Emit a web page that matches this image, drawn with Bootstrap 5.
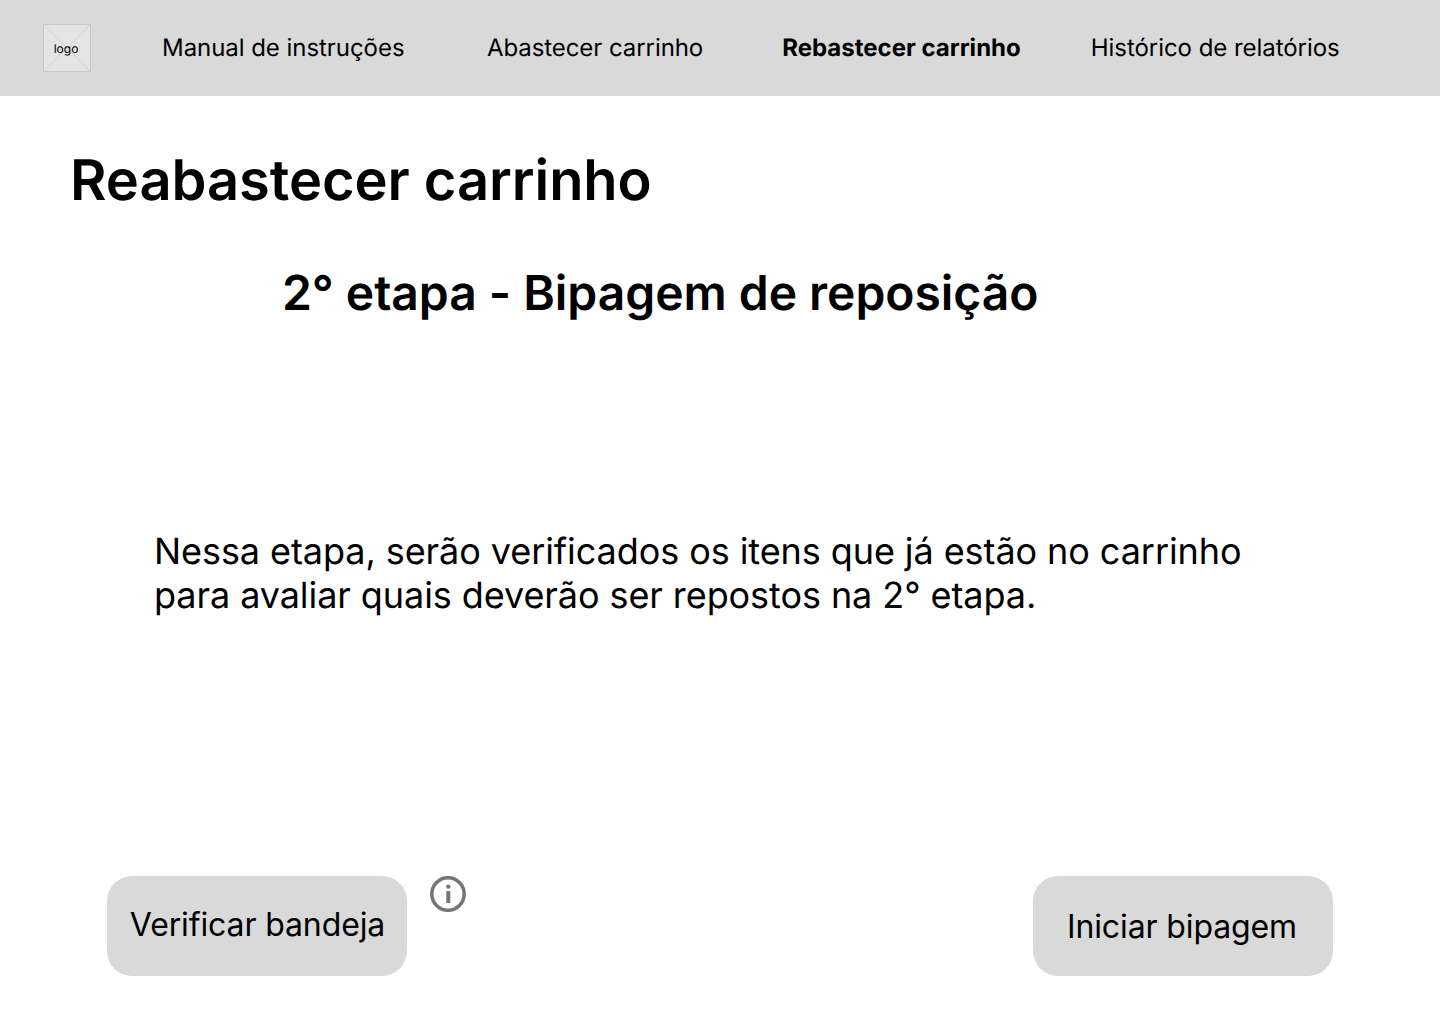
<!DOCTYPE html>
<html lang="pt-BR">
<head>
<meta charset="utf-8">
<meta name="viewport" content="width=device-width, initial-scale=1">
<title>Reabastecer carrinho</title>
<link href="https://cdn.jsdelivr.net/npm/bootstrap@5.3.0/dist/css/bootstrap.min.css" rel="stylesheet">
<style>
body{font-family:Inter,"Liberation Sans",sans-serif;color:#000;height:1024px;overflow:hidden;text-rendering:geometricPrecision}
.topbar{background:#d9d9d9;height:96px;padding:0 0 0 43px}
.brand-logo{width:48px;height:48px;display:block}
.brand-logo text{font-size:12px;fill:#000}
.menu{margin-left:71px;padding-bottom:1px;font-size:24px;line-height:29px;white-space:nowrap}
.menu .nav-link{color:#000;padding:0;letter-spacing:-.05px}
.menu .item-supply{margin-left:82.4px;letter-spacing:-.07px}
.menu .item-restock{margin-left:79px;letter-spacing:0}
.menu .item-history{margin-left:70px}
.page-title{font-size:56px;line-height:68px;font-weight:600;margin:50px 0 0 70px;letter-spacing:-.05px}
.step-title{font-size:48px;line-height:58px;font-weight:600;margin:50px 0 0 282px;letter-spacing:-.04px}
.intro{font-size:36px;line-height:44px;width:1120px;margin:207px 0 0 154px;letter-spacing:-.075px}
.actions{margin:259px 107px 0}
.action-btn,.action-btn:hover{background:#d9d9d9;color:#000;width:300px;height:100px;border:0;border-radius:25px;font-size:32px;line-height:39px;padding:0 2px 0 0;white-space:nowrap;letter-spacing:-.12px}
.action-check{padding:0 0 3px 1px!important}
.info-btn{margin-left:23px;line-height:0}
</style>
<script src="https://cdn.jsdelivr.net/npm/bootstrap@5.3.0/dist/js/bootstrap.bundle.min.js"></script>
</head>
<body class="bg-white d-flex flex-column">
<header class="topbar d-flex align-items-center flex-shrink-0">
<a href="#" aria-label="logo"><svg class="brand-logo" viewBox="0 0 48 48"><path fill="#e4e4e4" d="M0 0h48v48H0z"/><path d="M0 0 48 48M48 0 0 48" stroke="#cecece" stroke-width=".8" fill="none"/><rect x=".5" y=".5" width="47" height="47" fill="none" stroke="#c6c6c6"/><text x="23" y="29" text-anchor="middle">logo</text></svg></a>
<nav class="nav menu flex-nowrap">
<a class="nav-link" href="#">Manual de instruções</a>
<a class="nav-link item-supply" href="#">Abastecer carrinho</a>
<a class="nav-link item-restock fw-bold" href="#">Rebastecer carrinho</a>
<a class="nav-link item-history" href="#">Histórico de relatórios</a>
</nav>
</header>
<main>
<h1 class="page-title">Reabastecer carrinho</h1>
<h2 class="step-title">2° etapa - Bipagem de reposição</h2>
<p class="intro">Nessa etapa, serão verificados os itens que já estão no carrinho<br>para avaliar quais deverão ser repostos na 2° etapa.</p>
<div class="actions d-flex align-items-start">
<button class="btn action-btn action-check">Verificar bandeja</button>
<a class="info-btn" href="#" aria-label="Informações"><svg width="36" height="36" viewBox="0 0 36 36"><circle cx="18" cy="18" r="16.2" fill="none" stroke="#757575" stroke-width="3.5"/><path d="M18.3 15v12" stroke="#757575" stroke-width="4"/><circle cx="18.3" cy="10.6" r="2.2" fill="#757575"/></svg></a>
<button class="btn action-btn ms-auto">Iniciar bipagem</button>
</div>
</main>
</body>
</html>
